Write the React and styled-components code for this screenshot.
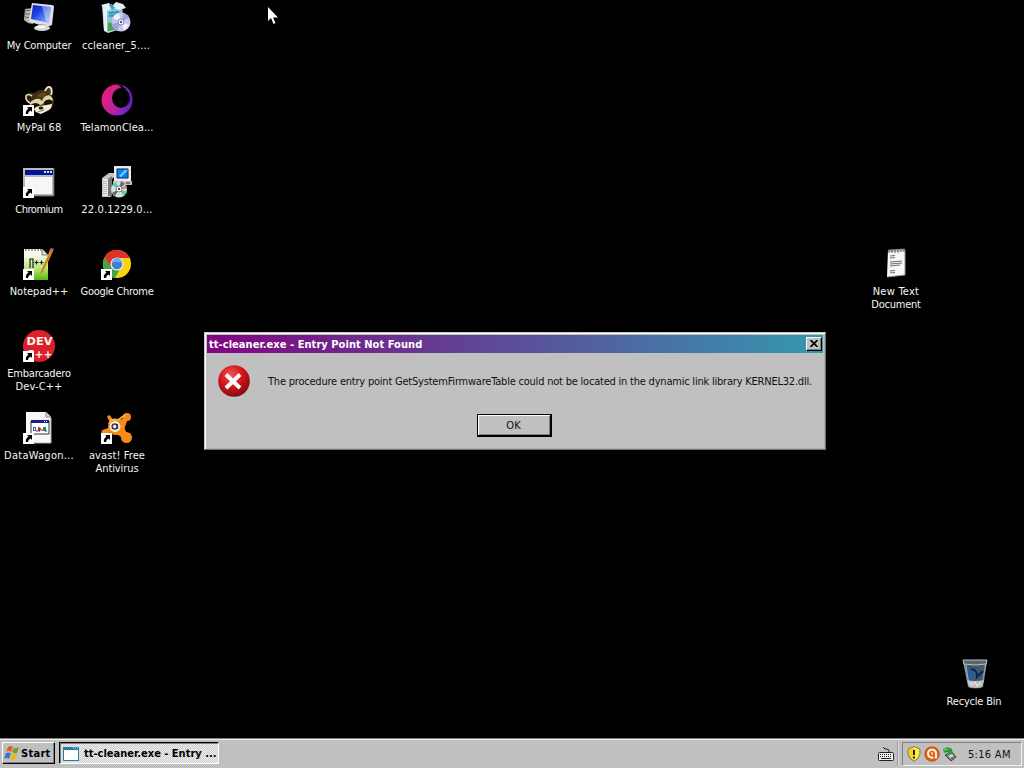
import React from 'react';
import styled, { createGlobalStyle, css } from 'styled-components';

const GlobalStyle = createGlobalStyle`
  * { box-sizing: border-box; }
  body {
    margin: 0;
    background: #000;
    overflow: hidden;
    font-family: "DejaVu Sans Condensed", "DejaVu Sans", sans-serif;
    font-stretch: condensed;
    font-size: 11px;
    line-height: 13px;
    cursor: default;
  }
  svg { display: block; flex-shrink: 0; }
`;

const Screen = styled.div`
  position: relative;
  display: flex;
  flex-direction: column;
  width: 1024px;
  height: 768px;
  background: #000;
`;

const Desktop = styled.main`
  position: relative;
  flex: 1;
`;

const Shortcut = styled.div`
  position: absolute;
  left: ${(p) => p.$x - 39}px;
  top: ${(p) => p.$y}px;
  width: 78px;
  display: flex;
  flex-direction: column;
  align-items: center;
  gap: 5px;
`;

const Picture = styled.div`
  position: relative;
  width: 32px;
  height: 32px;
`;

const LinkBadge = styled.svg`
  position: absolute;
  left: 0;
  bottom: 0;
`;

const Captions = styled.div`
  display: flex;
  flex-direction: column;
  align-items: center;
`;

const Caption = styled.span`
  color: #f4f4f4;
  white-space: nowrap;
  letter-spacing: ${(p) => p.$track || 0}px;
`;

const Pointer = styled.svg`
  position: absolute;
  left: 267px;
  top: 7px;
`;

const Dialog = styled.section`
  position: absolute;
  left: 204px;
  top: 332px;
  width: 622px;
  height: 118px;
  padding: 1px;
  background: #c0c0c0;
  border: 1px solid;
  border-color: #c8c8c8 #707070 #707070 #c8c8c8;
  box-shadow: inset 1px 1px #fff, inset -1px -1px #b0b0b0;
`;

const TitleBar = styled.header`
  display: flex;
  align-items: center;
  justify-content: space-between;
  height: 18px;
  margin: 1px;
  padding: 0 1px 0 2px;
  background: linear-gradient(90deg, #820482, #3498b0);
`;

const Title = styled.h1`
  margin: 0;
  padding-top: 1px;
  font-size: 11px;
  line-height: 17px;
  font-weight: bold;
  color: #fff;
  letter-spacing: ${(p) => p.$track}px;
`;

const raised = css`
  background: #c0c0c0;
  border: 1px solid;
  border-color: #fff #000 #000 #fff;
  box-shadow: inset -1px -1px #808080;
`;

const CloseButton = styled.button`
  ${raised}
  display: flex;
  align-items: flex-start;
  width: 16px;
  height: 14px;
  padding: 2px 0 0 3px;
`;

const Message = styled.div`
  display: flex;
  align-items: center;
  height: 32px;
  margin: 12px 0 0 12px;
  gap: 18px;
`;

const MessageText = styled.p`
  margin: 0;
  color: #111;
  white-space: nowrap;
  letter-spacing: ${(p) => p.$track}px;
`;

const Actions = styled.div`
  display: flex;
  justify-content: center;
  margin: 17px 1px 0 0;
`;

const PushButton = styled.button`
  width: 75px;
  height: 23px;
  padding: 1px 1px 0 0;
  font: inherit;
  color: #111;
  background: #c0c0c0;
  border: solid #000;
  border-width: 1px 2px 2px 1px;
  box-shadow: inset 1px 1px #fff, inset -1px -1px #808080;
`;

const Taskbar = styled.footer`
  display: flex;
  align-items: flex-start;
  height: 30px;
  padding: 3px 2px 2px 2px;
  background: #c0c0c0;
  border-top: 1px solid #808080;
  box-shadow: inset 0 1px #efefef;
`;

const StartButton = styled.button`
  ${raised}
  display: flex;
  align-items: center;
  width: 53px;
  height: 22px;
  padding: 0 0 0 1px;
  gap: 1px;
  font: inherit;
  font-weight: bold;
  color: #000;
`;

const TaskButton = styled.button`
  display: flex;
  align-items: center;
  width: 160px;
  height: 22px;
  margin-left: 4px;
  padding: 1px 0 0 3px;
  gap: 5px;
  font: inherit;
  font-weight: bold;
  color: #000;
  background: repeating-conic-gradient(#f4f4f4 0 25%, #c8c8c8 0 50%) 0 0 / 2px 2px;
  border: 1px solid;
  border-color: #000 #fff #fff #000;
  box-shadow: inset 1px 1px #808080;
`;

const ButtonText = styled.span`
  white-space: nowrap;
  letter-spacing: ${(p) => p.$track || 0}px;
`;

const Keyboard = styled.div`
  margin: 4px 2px 0 auto;
`;

const Divider = styled.div`
  width: 2px;
  height: 24px;
  margin-right: 3px;
  background: linear-gradient(90deg, #9c9c9c 50%, #dcdcdc 50%);
`;

const Tray = styled.div`
  display: flex;
  align-items: center;
  width: 120px;
  height: 24px;
  padding: 0 0 0 3px;
  gap: 2px;
  border: 1px solid;
  border-color: #808080 #f4f4f4 #f4f4f4 #808080;
`;

const Clock = styled.time`
  margin-left: 8px;
  color: #111;
  white-space: nowrap;
  letter-spacing: ${(p) => p.$track}px;
`;

const Art = ({ children }) => (
  <svg width="32" height="32" viewBox="0 0 32 32">{children}</svg>
);

const ComputerIcon = () => (
  <Art>
    <defs>
      <linearGradient id="screen" x1="0" y1="0" x2="1" y2="1">
        <stop offset="0" stopColor="#0a1cb4" />
        <stop offset=".4" stopColor="#2048e0" />
        <stop offset="1" stopColor="#a8c8ff" />
      </linearGradient>
    </defs>
    <path d="M2 7l8-1v16l-5-1-4-3z" fill="#b9b9ae" />
    <path d="M2 9l6-1M2 12l6 0M2 15l6 1" stroke="#666" />
    <path d="M9 1l20 2q2 0 2 2l-2 18-5 2L7 20q-2-1-1-3z" fill="#dedfe4" />
    <path d="M10 3l18 2-2 16L8 17z" fill="url(#screen)" />
    <path d="M19 4l9 1-2 15-3-1z" fill="#fff" opacity=".35" />
    <path d="M17 22l6 1 1 3-8-1z" fill="#999" />
    <ellipse cx="19" cy="26" rx="8" ry="3" fill="#d8d8d8" />
    <ellipse cx="18" cy="25" rx="5" ry="1.4" fill="#f6f6f6" />
  </Art>
);

const InstallerIcon = () => (
  <Art>
    <path d="M2 4l20-1 2 23-16 5-4-2z" fill="#b8d9e8" />
    <path d="M3 4l5 4-1 22-3-2z" fill="#e8f1f7" />
    <path d="M7 8l15-2v20L7 30z" fill="#8bc3d8" />
    <path d="M8 21l12-3v9L8 29z" fill="#47a943" />
    <path d="M1 3l8-2 3 3 4-4 7 2 3 4-7 2-5-2-7 3z" fill="#e3eef5" />
    <path d="M9 3l3-1 3 4-3 2z" fill="#3d9ec2" />
    <path d="M9 11l10-1M9 14l8-1" stroke="#2b93b4" strokeWidth="2" />
    <circle cx="21" cy="20" r="9.500" fill="#c5c7ed" />
    <path d="M21 20L13 16a9 9 0 016-5zM21 20l8 3a9 9 0 01-5 5z" fill="#eef0fb" />
    <path d="M21 20l3-9a9 9 0 015 5zM21 20l-4 8a9 9 0 01-5-6z" fill="#a49ee2" />
    <circle cx="21" cy="20" r="3" fill="#f8f8ff" stroke="#7d8aac" />
    <circle cx="21" cy="20" r="1.2" fill="#567" />
  </Art>
);

const RaccoonIcon = () => (
  <Art>
    <path d="M3 12q3-4 8-3 5-4 11-3l6 3 3 8q0 7-6 10l-8 3-7-3-5-9z" fill="#3d3011" />
    <path d="M7 19q-5-3-4-7 2-3 6 0" fill="#2a2110" stroke="#e9ddb8" strokeWidth="1.600" />
    <path d="M22 7q2-5 5-4 3 3 1 8" fill="#493a20" stroke="#f5ead0" strokeWidth="1.800" />
    <path d="M7 19q4-5 10-4l2 2q1-5 7-6 4 2 4 6-4-3-8 0-2 4-5 4-4-4-10 0z" fill="#e2d2a2" />
    <path d="M9 21q4-3 7 0l-2 3q-4 1-5-3zM21 18q4-4 8-1l-2 4q-5 3-6-3z" fill="#171109" />
    <path d="M11 25q2-3 6-3l6-1 6-1q0 5-5 7l-6 3-5-2z" fill="#f1ebd8" />
    <path d="M13 12l7-4 4 2-5 4z" fill="#5b481d" />
    <ellipse cx="18" cy="24" rx="2.4" ry="1.600" fill="#171717" />
    <path d="M15 28l6-2" stroke="#8d784f" />
  </Art>
);

const CrescentIcon = () => (
  <Art>
    <defs>
      <linearGradient id="moon" x1="0" y1=".2" x2="1" y2=".8">
        <stop offset="0" stopColor="#f51a78" />
        <stop offset=".5" stopColor="#ba239c" />
        <stop offset="1" stopColor="#5a24dc" />
      </linearGradient>
    </defs>
    <path fillRule="evenodd" d="M16 .5a15.500 15.500 0 100 31 15.500 15.500 0 100-31zM20 4a9 10 0 110 20 9 10 0 110-20z" fill="url(#moon)" />
    <path d="M17 1l5 4h4L22 2z" fill="#000" />
    <path d="M22 2q8 4 8 12 0 9-7 13" fill="none" stroke="#6524b8" strokeWidth="1.500" />
    <path d="M3 10q5-7 13-7M3 21q5 7 13 7" fill="none" stroke="#d71f88" strokeWidth="1.200" />
  </Art>
);

const WindowIcon = () => (
  <Art>
    <path d="M0 2h31v28H0z" fill="#b9b9b9" />
    <path d="M31 2v28H1" fill="none" stroke="#555" />
    <path d="M2 4h28v5H2z" fill="#00149c" />
    <path d="M21 5h2v2h-2zM24 5h2v2h-2zM27 5h2v2h-2z" fill="#ddd" />
    <path d="M2 11h27v17H2z" fill="#f6f6f6" />
  </Art>
);

const SetupIcon = () => (
  <Art>
    <path d="M1 12l7-5h5v4l-3 3v17H1z" fill="#c3c3c3" />
    <path d="M2 13h5v17H2z" fill="#e6e6e6" />
    <path d="M7 13l4-3v20H7z" fill="#777" />
    <path d="M3 15v13M5 15v13" stroke="#999" strokeDasharray="1 1" />
    <path d="M13 0h17v15H13z" fill="#d8d8d8" />
    <path d="M14 1h15v13H14z" fill="none" stroke="#fff" />
    <path d="M16 3h11v9H16z" fill="#087ff4" stroke="#16306a" />
    <path d="M18 10l6-6h3l-7 7z" fill="#6bd8ff" />
    <path d="M12 15h19v4H12z" fill="#bfbfbf" />
    <path d="M25 17h4" stroke="#333" />
    <circle cx="18" cy="23.500" r="8" fill="#d7dfd9" />
    <path d="M18 23l-7-4 4-3zM18 23l8 3-3 4z" fill="#4dd0b8" />
    <path d="M18 23l2-8 4 3zM18 23l-4 7-3-3z" fill="#667" />
    <path d="M18 23l7-4 1 4z" fill="#ca9292" />
    <circle cx="18" cy="23" r="3" fill="#fff" stroke="#777" />
    <circle cx="18" cy="23" r="1" fill="#111" />
  </Art>
);

const NotepadIcon = () => (
  <Art>
    <defs>
      <linearGradient id="meadow" x1="0" y1="0" x2="0" y2="1">
        <stop offset=".2" stopColor="#f7faed" />
        <stop offset=".65" stopColor="#b7e174" />
        <stop offset="1" stopColor="#50b90c" />
      </linearGradient>
    </defs>
    <path d="M1 1h18l6 6v25H1z" fill="url(#meadow)" />
    <path d="M2 2h17" stroke="#555" strokeDasharray="2 1" />
    <path d="M19 1v6h6" fill="#ddd" stroke="#777" />
    <path d="M7 20v-9h3v9M11.500 14.500h4M13.500 12.500v4M16.500 14.500h4M18.500 12.500v4" fill="none" stroke="#172018" strokeWidth="1.200" />
    <path d="M27 2l3 1-10 22-3 2 1-4z" fill="#e6a11b" />
    <path d="M29 2l-11 23" stroke="#a8701c" />
    <path d="M26 3l2-3 3 1-2 4z" fill="#b86b76" />
  </Art>
);

const ChromeIcon = () => (
  <Art>
    <circle cx="16" cy="16" r="14" fill="#fbd20e" />
    <path d="M3.500 9.500A14 14 0 0014 29.900l6.500-11.400-4.500 4-6-4z" fill="#3ba949" />
    <path d="M3.500 9.500l6 9L16 10h12.500A14 14 0 003.500 9.500z" fill="#df302b" />
    <circle cx="16" cy="16" r="6.600" fill="#e8e8e8" />
    <circle cx="16" cy="16" r="5.200" fill="#3c7fd1" />
    <path d="M11 15a5 5 0 0110 0q-5-2-10 0z" fill="#70a9e8" />
  </Art>
);

const DiscText = styled.text`
  font: bold ${(p) => p.$size}px "DejaVu Sans", sans-serif;
  fill: #fff5e9;
  text-anchor: middle;
`;

const DevIcon = () => (
  <Art>
    <circle cx="16" cy="16" r="16" fill="#d9202b" />
    <DiscText $size="10" x="16.500" y="15" textLength="26" lengthAdjust="spacingAndGlyphs">DEV</DiscText>
    <DiscText $size="10" x="16.500" y="28" textLength="26" lengthAdjust="spacingAndGlyphs">C++</DiscText>
  </Art>
);

const DataIcon = () => (
  <Art>
    <path d="M3 0h20l5 5v26H3z" fill="#f8f8f8" />
    <path d="M23 0v5h5" fill="#d5d5d5" stroke="#888" />
    <path d="M28 6v25H3" fill="none" stroke="#b0b0b0" />
    <path d="M8 9h18v13H8z" fill="#fff" stroke="#333" />
    <path d="M8 8h18v3H8z" fill="#181f8b" />
    <path d="M21 9.500h1M23 9.500h1" stroke="#fff" />
    <path d="M10 15h3v4h-3z" fill="#315bb4" />
    <path d="M11 16h1v2h-1z" fill="#fff" />
    <path d="M15 15l3 1-1 4-2-1z" fill="#b21e3b" />
    <path d="M20 15h3v4h-3v-2z" fill="#238663" />
    <path d="M13 19h2M18 18h2M22 19h2" stroke="#235" />
  </Art>
);

const AvastIcon = () => (
  <Art>
    <g fill="#f58b1c" stroke="#f58b1c" strokeLinecap="round">
      <path d="M14 15L8 5" strokeWidth="3.500" />
      <path d="M17 14l9-9" strokeWidth="4" />
      <path d="M16 17l9 8" strokeWidth="7" />
      <path d="M12 17l-9 3" strokeWidth="5" />
      <circle cx="26" cy="5" r="4" stroke="none" />
      <circle cx="25.500" cy="25.500" r="5.500" stroke="none" />
      <circle cx="15" cy="15" r="8" stroke="none" />
      <path d="M15 8L26 8 23 16 26 24 15 22z" strokeWidth="1" />
    </g>
    <path d="M8 12Q10 6 17 8l7-5" fill="none" stroke="#ffb441" strokeWidth="1.800" />
    <circle cx="14" cy="14.500" r="5.400" fill="#f6f2e8" />
    <circle cx="13.700" cy="14.500" r="2.500" fill="none" stroke="#40394c" strokeWidth="1.600" />
    <path d="M16.500 12v5" stroke="#40394c" strokeWidth="1.300" />
  </Art>
);

const TextFileIcon = () => (
  <Art>
    <path d="M8 2l17-1v26L7 29z" fill="#f5f8f7" />
    <path d="M25 2v25L7 29" fill="none" stroke="#8f9493" />
    <path d="M8 2l17-1v2L8 4z" fill="#b6b0a0" />
    <path d="M9 1v4M12 1v4M15 1v4M18 1v4M21 0v4M24 0v4" stroke="#6a604c" />
    <path d="M10 8l5-.5M10 10l5-.5M10 14l12-1M10 16l12-1M10 18l10-1M10 23l5-.5M10 25l5-.5" stroke="#697174" />
  </Art>
);

const BinIcon = () => (
  <Art>
    <defs>
      <linearGradient id="glass">
        <stop offset="0" stopColor="#a6b1b5" />
        <stop offset=".45" stopColor="#415462" />
        <stop offset="1" stopColor="#a4adb0" />
      </linearGradient>
    </defs>
    <path d="M5 3h24l-4 26q-8 3-15 0z" fill="url(#glass)" />
    <path d="M7 6h20l-3 17H10z" fill="#465864" />
    <path d="M9 12l6-3 4 6-5 3 2 5-5 2zM24 12l-6 6 2 4 4-3z" fill="#285b9d" />
    <path d="M13 11q7 1 6 8l6-6" fill="none" stroke="#142244" strokeWidth="2" />
    <path d="M9 22q7 2 17 0l-2 7q-7 2-13 0z" fill="#bfc0bd" />
    <path d="M12 24l2 3 3-3 2 4 4-3" fill="none" stroke="#eee" />
    <path d="M5 2h24l-1 4q-11 2-22 0z" fill="#58676e" stroke="#bbc2c1" />
    <path d="M8 7l3 20" stroke="#c8d0d3" opacity=".7" />
  </Art>
);

const ErrorIcon = () => (
  <svg width="32" height="32" viewBox="0 0 32 32">
    <defs>
      <radialGradient id="danger" cx=".4" cy=".3" r=".75">
        <stop offset="0" stopColor="#f2534f" />
        <stop offset=".5" stopColor="#d4151a" />
        <stop offset="1" stopColor="#760b10" />
      </radialGradient>
    </defs>
    <circle cx="16" cy="16" r="15.800" fill="url(#danger)" />
    <path d="M8 9.500l14 13.500M22 9.500L8 23" stroke="#fff" strokeWidth="4" />
  </svg>
);

const FlagIcon = () => (
  <svg width="16" height="16" viewBox="0 0 16 16">
    <path d="M4 2q3-2 5 0L7 7Q5 5 2 7z" fill="#e45c25" />
    <path d="M10 3q2 1 5-1l-2 6q-2 1-5-1z" fill="#62a62b" />
    <path d="M2 8q3-1 5 0l-2 6q-2-2-5 0z" fill="#3576d4" />
    <path d="M8 8q2 2 5 1l-2 5q-3 2-5 0z" fill="#efb51b" />
  </svg>
);

const AppIcon = () => (
  <svg width="16" height="16" viewBox="0 0 16 16">
    <path d="M0 1h16v14H0z" fill="#287aa0" />
    <path d="M1 4h14v10H1z" fill="#fff" />
    <path d="M10 2h1M12 2h1M14 2h1" stroke="#c4e9f4" />
  </svg>
);

const KeyboardIcon = () => (
  <svg width="17" height="16" viewBox="0 0 17 16">
    <path d="M11 6V4L9 3H7L5 1" fill="none" stroke="#222" />
    <rect x=".500" y="6.500" width="15" height="8" rx="1" fill="#eee" stroke="#222" />
    <path d="M2 8.500h12M2 10.500h12" stroke="#222" strokeDasharray="1 1" />
    <path d="M3 12.500h10" stroke="#222" />
  </svg>
);

const ShieldIcon = () => (
  <svg width="16" height="16" viewBox="0 0 16 16">
    <path d="M8 .5l6 2.500v5q-1 5-6 7.500-5-2.500-6-7.500V3z" fill="#f4d51d" stroke="#777a72" />
    <path d="M8 1l5 3v4q-1 4-5 6z" fill="#fff03c" />
    <path d="M8 4v5M8 10.500v2" stroke="#222" strokeWidth="2" />
  </svg>
);

const AvastTrayIcon = () => (
  <svg width="16" height="16" viewBox="0 0 16 16">
    <circle cx="8" cy="8" r="7.800" fill="#d95a18" />
    <path d="M9.500 11.300A4 4 0 1112 8v4.500" fill="none" stroke="#fff0d4" strokeWidth="2.200" />
    <path d="M8 6v3" stroke="#ffe1bb" strokeWidth="1.400" />
  </svg>
);

const DeviceIcon = () => (
  <svg width="16" height="16" viewBox="0 0 16 16">
    <path d="M3 9l7-3 4 5-5 4z" fill="#747d7c" stroke="#444" />
    <path d="M6 10l4-2 2 2-4 2z" fill="#c8d1cc" />
    <path d="M1 3l5-2 3 2V1l2 6-6 2 1-3-4 1z" fill="#249b36" />
    <path d="M2 4l4-1" stroke="#80d985" />
  </svg>
);

const entries = [
  { x: 39, y: 2, icon: ComputerIcon, lines: ['My Computer'], tracks: [-0.2] },
  { x: 116, y: 2, icon: InstallerIcon, lines: ['ccleaner_5....'], tracks: [0.15] },
  { x: 39, y: 84, icon: RaccoonIcon, link: true, lines: ['MyPal 68'] },
  { x: 117, y: 84, icon: CrescentIcon, lines: ['TelamonClea...'], tracks: [0.05] },
  { x: 39, y: 166, icon: WindowIcon, link: true, lines: ['Chromium'], tracks: [-0.5] },
  { x: 117, y: 166, icon: SetupIcon, lines: ['22.0.1229.0...'], tracks: [0.15] },
  { x: 39, y: 248, icon: NotepadIcon, link: true, lines: ['Notepad++'] },
  { x: 117, y: 248, icon: ChromeIcon, link: true, lines: ['Google Chrome'], tracks: [-0.3] },
  { x: 39, y: 330, icon: DevIcon, link: true, lines: ['Embarcadero', 'Dev-C++'], tracks: [-0.2, 0.1] },
  { x: 39, y: 412, icon: DataIcon, link: true, lines: ['DataWagon...'], tracks: [0.25] },
  { x: 117, y: 412, icon: AvastIcon, link: true, lines: ['avast! Free', 'Antivirus'], tracks: [0.1, -0.1] },
  { x: 896, y: 248, icon: TextFileIcon, lines: ['New Text', 'Document'], tracks: [0.25, -0.25] },
  { x: 974, y: 658, icon: BinIcon, lines: ['Recycle Bin'], tracks: [-0.2] },
];

function DesktopEntry({ entry }) {
  const Icon = entry.icon;
  return (
    <Shortcut $x={entry.x} $y={entry.y}>
      <Picture>
        <Icon />
        {entry.link && (
          <LinkBadge width="11" height="11" viewBox="0 0 11 11">
            <path d="M0 0h11v11H0z" fill="#fff" />
            <path d="M4 2h5v5L7.500 5.500Q5 6.500 5 9H3Q2 6 5.500 3.500z" fill="#000" />
          </LinkBadge>
        )}
      </Picture>
      <Captions>
        {entry.lines.map((line, i) => (
          <Caption key={line} $track={(entry.tracks || [])[i]}>{line}</Caption>
        ))}
      </Captions>
    </Shortcut>
  );
}

export default function App() {
  return (
    <>
      <GlobalStyle />
      <Screen>
        <Desktop>
          {entries.map((entry) => <DesktopEntry key={entry.lines[0]} entry={entry} />)}
          <Dialog>
            <TitleBar>
              <Title $track={0.05}>tt-cleaner.exe - Entry Point Not Found</Title>
              <CloseButton aria-label="Close">
                <svg width="8" height="7" viewBox="0 0 8 7">
                  <path d="M.5 0l7 7M7.500 0l-7 7" stroke="#000" strokeWidth="1.700" />
                </svg>
              </CloseButton>
            </TitleBar>
            <Message>
              <ErrorIcon />
              <MessageText $track={-0.212}>
                The procedure entry point GetSystemFirmwareTable could not be located in the dynamic link library KERNEL32.dll.
              </MessageText>
            </Message>
            <Actions><PushButton>OK</PushButton></Actions>
          </Dialog>
          <Pointer width="12" height="18" viewBox="0 0 12 18">
            <path d="M1 0v14l3-3 2.500 6 2-1L6 10.500h5z" fill="#fff" />
          </Pointer>
        </Desktop>
        <Taskbar>
          <StartButton><FlagIcon /><ButtonText $track={0.3}>Start</ButtonText></StartButton>
          <TaskButton><AppIcon /><ButtonText $track={0}>tt-cleaner.exe - Entry ...</ButtonText></TaskButton>
          <Keyboard><KeyboardIcon /></Keyboard>
          <Divider />
          <Tray>
            <ShieldIcon /><AvastTrayIcon /><DeviceIcon />
            <Clock $track={0.3}>5:16 AM</Clock>
          </Tray>
        </Taskbar>
      </Screen>
    </>
  );
}
